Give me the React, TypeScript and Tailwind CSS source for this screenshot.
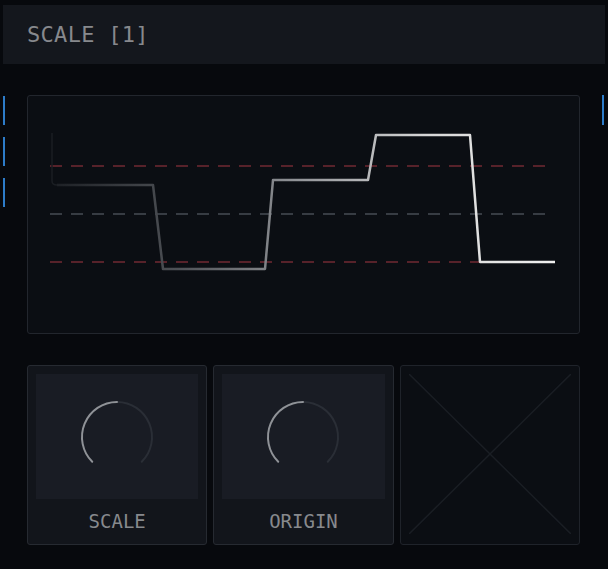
import React from "react";

const mono = { fontFamily: '"DejaVu Sans Mono", "Liberation Mono", monospace' };

function Knob() {
  return (
    <svg width="80" height="80" viewBox="0 0 80 80" fill="none">
      <path d="M 64.75 64.75 A 35 35 0 0 0 40 5" stroke="#2a2e36" strokeWidth="2" strokeLinecap="round" />
      <path d="M 15.25 64.75 A 35 35 0 0 1 40 5" stroke="#8f9297" strokeWidth="2" strokeLinecap="round" />
    </svg>
  );
}

function KnobCard({ label }: { label: string }) {
  return (
    <div className="flex h-[180px] flex-col rounded-[3px] border border-[#262a31] bg-[#12151b] px-[8px] pt-[8px]">
      <div className="flex h-[125px] items-center justify-center bg-[#191c24]">
        <Knob />
      </div>
      <div className="flex flex-1 items-center justify-center text-[19px] text-[#87898d]" style={mono}>
        {label}
      </div>
    </div>
  );
}

function Graph() {
  return (
    <svg width="551" height="237" viewBox="1 1 551 237" fill="none">
      <defs>
        <linearGradient id="wave" gradientUnits="userSpaceOnUse" x1="25" y1="0" x2="530" y2="0">
          <stop offset="0" stopColor="#1c1f24" />
          <stop offset="0.25" stopColor="#4e5156" />
          <stop offset="0.5" stopColor="#96989c" />
          <stop offset="0.75" stopColor="#d8d8d8" />
          <stop offset="1" stopColor="#f0f0f0" />
        </linearGradient>
      </defs>
      <line x1="23" y1="71" x2="522" y2="71" stroke="#722a33" strokeWidth="1.5" strokeDasharray="12 9" />
      <line x1="23" y1="119" x2="522" y2="119" stroke="#474c54" strokeWidth="1.5" strokeDasharray="12 9" />
      <line x1="23" y1="167" x2="522" y2="167" stroke="#722a33" strokeWidth="1.5" strokeDasharray="12 9" />
      <path d="M 25 38 L 25 86 Q 25 90 30 90" stroke="#1b1e23" strokeWidth="1.5" />
      <path
        d="M 30 90 L 126 90 L 136 174 L 238 174 L 246 85 L 341 85 L 349 40 L 443 40 L 453 167 L 528 167"
        stroke="url(#wave)"
        strokeWidth="2.5"
        strokeLinejoin="round"
      />
    </svg>
  );
}

export default function App() {
  return (
    <div className="h-[569px] w-[608px] overflow-hidden bg-[#07090d] pt-[5px]">
      <div className="mx-[3px] flex h-[59px] items-center bg-[#14171d] pl-[24px]">
        <span className="text-[22px] tracking-[0.3px] text-[#87898d]" style={mono}>
          SCALE [1]
        </span>
      </div>
      <div className="mt-[31px] flex">
        <div className="flex w-[27px] flex-col gap-[12px] pl-[3px] pt-[1px]">
          <div className="h-[29px] w-[2px] bg-[#2d7cc9]" />
          <div className="h-[29px] w-[2px] bg-[#2d7cc9]" />
          <div className="h-[29px] w-[2px] bg-[#2d7cc9]" />
        </div>
        <div className="flex w-[553px] flex-col gap-[31px]">
          <div className="h-[239px] rounded-[3px] border border-[#22262d] bg-[#0b0e13]">
            <Graph />
          </div>
          <div className="grid grid-cols-3 gap-[6px]">
            <KnobCard label="SCALE" />
            <KnobCard label="ORIGIN" />
            <div className="h-[180px] rounded-[3px] border border-[#1f232a] bg-[#0b0e13] p-[8px]">
              <svg width="162" height="160" viewBox="0 0 162 160" preserveAspectRatio="none">
                <line x1="0" y1="0" x2="162" y2="160" stroke="#1a1e24" strokeWidth="1.5" />
                <line x1="162" y1="0" x2="0" y2="160" stroke="#1a1e24" strokeWidth="1.5" />
              </svg>
            </div>
          </div>
        </div>
        <div className="flex w-[28px] justify-end pr-[4px]">
          <div className="h-[30px] w-[2px] bg-[#2d7cc9]" />
        </div>
      </div>
    </div>
  );
}
